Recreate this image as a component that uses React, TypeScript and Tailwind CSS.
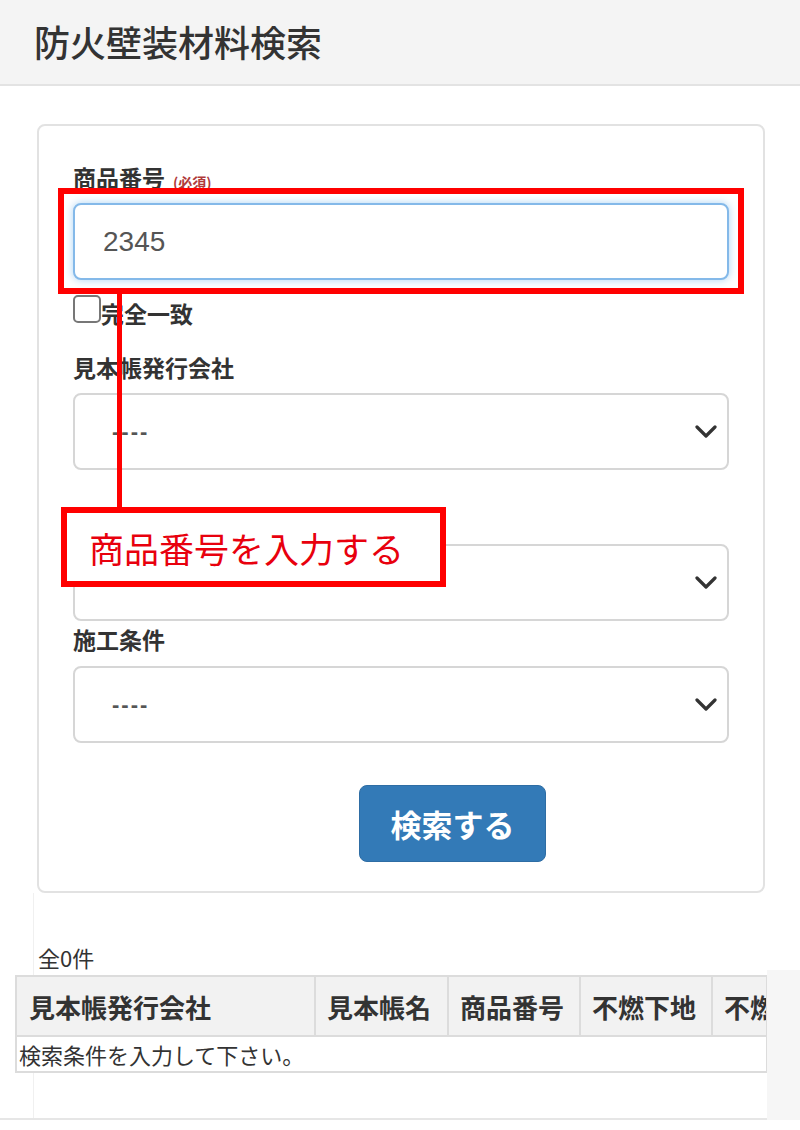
import React from "react";

const FONT = "font-['Noto_Sans_CJK_JP','Noto_Sans',sans-serif]";

function Chevron() {
  return (
    <svg width="22" height="13" viewBox="0 0 22 13" className="shrink-0">
      <polyline points="2,2 11,11 20,2" fill="none" stroke="#333" strokeWidth="3.2" strokeLinecap="round" strokeLinejoin="round" />
    </svg>
  );
}

function SelectBox() {
  return (
    <div className="h-[77px] w-full rounded-[8px] border-2 border-[#d6d6d6] bg-white flex items-center justify-between pl-[37px] pr-[10px]">
      <span className="text-[22px] text-[#555] tracking-[2px] font-['Liberation_Sans',sans-serif] font-bold">----</span>
      <Chevron />
    </div>
  );
}

export default function App() {
  return (
    <div className={`relative w-[800px] h-[1130px] overflow-hidden bg-white text-[#333] ${FONT}`}>
      <header className="h-[86px] bg-[#f4f4f4] border-b-2 border-[#e3e3e3] flex items-center pl-[34px]">
        <h1 className="text-[36px] font-medium leading-none text-[#333] mt-[-2px]">防火壁装材料検索</h1>
      </header>

      <main className="pl-[37px] pt-[38px] w-[765px]">
        <div className="h-[769px] rounded-[8px] border-2 border-[#e2e2e2] px-[34px] pt-[37px] flex flex-col">
          <div className="flex items-end h-[28px]">
            <span className="text-[23px] font-bold leading-[28px]">商品番号</span>
            <span className="text-[14px] font-bold text-[#b03a3a] ml-[8px] mb-[2px] leading-none">(必須)</span>
          </div>
          <div className="mt-[12px] h-[77px] rounded-[8px] border-2 border-[#84b9e9] shadow-[0_0_8px_rgba(102,175,233,0.55)] bg-white flex items-center pl-[28px]">
            <span className="text-[28px] text-[#555] font-['Liberation_Sans',sans-serif]">2345</span>
          </div>
          <div className="mt-[15px] h-[28px] flex items-center">
            <span className="w-[28px] h-[28px] rounded-[5px] border-2 border-[#777] bg-white" />
            <span className="text-[23px] font-bold leading-[28px] mt-[8px]">完全一致</span>
          </div>
          <div className="mt-[30px] text-[23px] font-bold leading-[28px]">見本帳発行会社</div>
          <div className="mt-[12px]"><SelectBox /></div>
          <div className="mt-[34px] text-[23px] font-bold leading-[28px]">見本帳名</div>
          <div className="mt-[12px]"><SelectBox /></div>
          <div className="mt-[4px] text-[23px] font-bold leading-[28px]">施工条件</div>
          <div className="mt-[13px]"><SelectBox /></div>
          <button className="mt-[42px] ml-[286px] w-[187px] h-[77px] rounded-[8px] bg-[#337ab7] border border-[#2e6da4] text-white text-[31px] font-bold leading-none">
            検索する
          </button>
        </div>
      </main>

      <section className="flex">
        <div className="w-[767px] h-[227px] border-b-2 border-[#e6e6e6]">
          <div className="ml-[33px] h-full border-l border-[#f0f0f0] pt-[50px]">
            <div className="pl-[4px] text-[22px] leading-[28px] text-[#333]">全0件</div>
            <div className="mt-[4px] -ml-[19px] w-[753px] overflow-hidden border-2 border-[#dcdcdc]">
              <div className="flex h-[60px] bg-[#f2f2f2] border-b-2 border-[#dcdcdc] text-[26px] font-bold text-[#333] whitespace-nowrap">
                <div className="w-[299px] shrink-0 border-r-2 border-[#dcdcdc] flex items-center pl-[12px]">見本帳発行会社</div>
                <div className="w-[133px] shrink-0 border-r-2 border-[#dcdcdc] flex items-center pl-[11px]">見本帳名</div>
                <div className="w-[132px] shrink-0 border-r-2 border-[#dcdcdc] flex items-center pl-[11px]">商品番号</div>
                <div className="w-[132px] shrink-0 border-r-2 border-[#dcdcdc] flex items-center pl-[11px]">不燃下地</div>
                <div className="w-[132px] shrink-0 flex items-center pl-[11px]">不燃</div>
              </div>
              <div className="h-[34px] flex items-center pl-[2px] text-[22px] text-[#333] bg-white whitespace-nowrap">検索条件を入力して下さい。</div>
            </div>
          </div>
        </div>
        <div className="flex-1 mt-[77px] bg-[#f6f6f6]" />
      </section>

      {/* annotations */}
      <div className="absolute left-[58px] top-[188px] w-[686px] h-[106px] border-[6px] border-[#ff0000]" />
      <div className="absolute left-[117px] top-[294px] w-[5px] h-[214px] bg-[#ff0000]" />
      <div className="absolute left-[61px] top-[507px] w-[385px] h-[80px] border-[6px] border-[#ff0000] bg-white flex items-center pl-[22px]">
        <span className="text-[35px] text-[#e8000d] leading-none whitespace-nowrap">商品番号を入力する</span>
      </div>
    </div>
  );
}
